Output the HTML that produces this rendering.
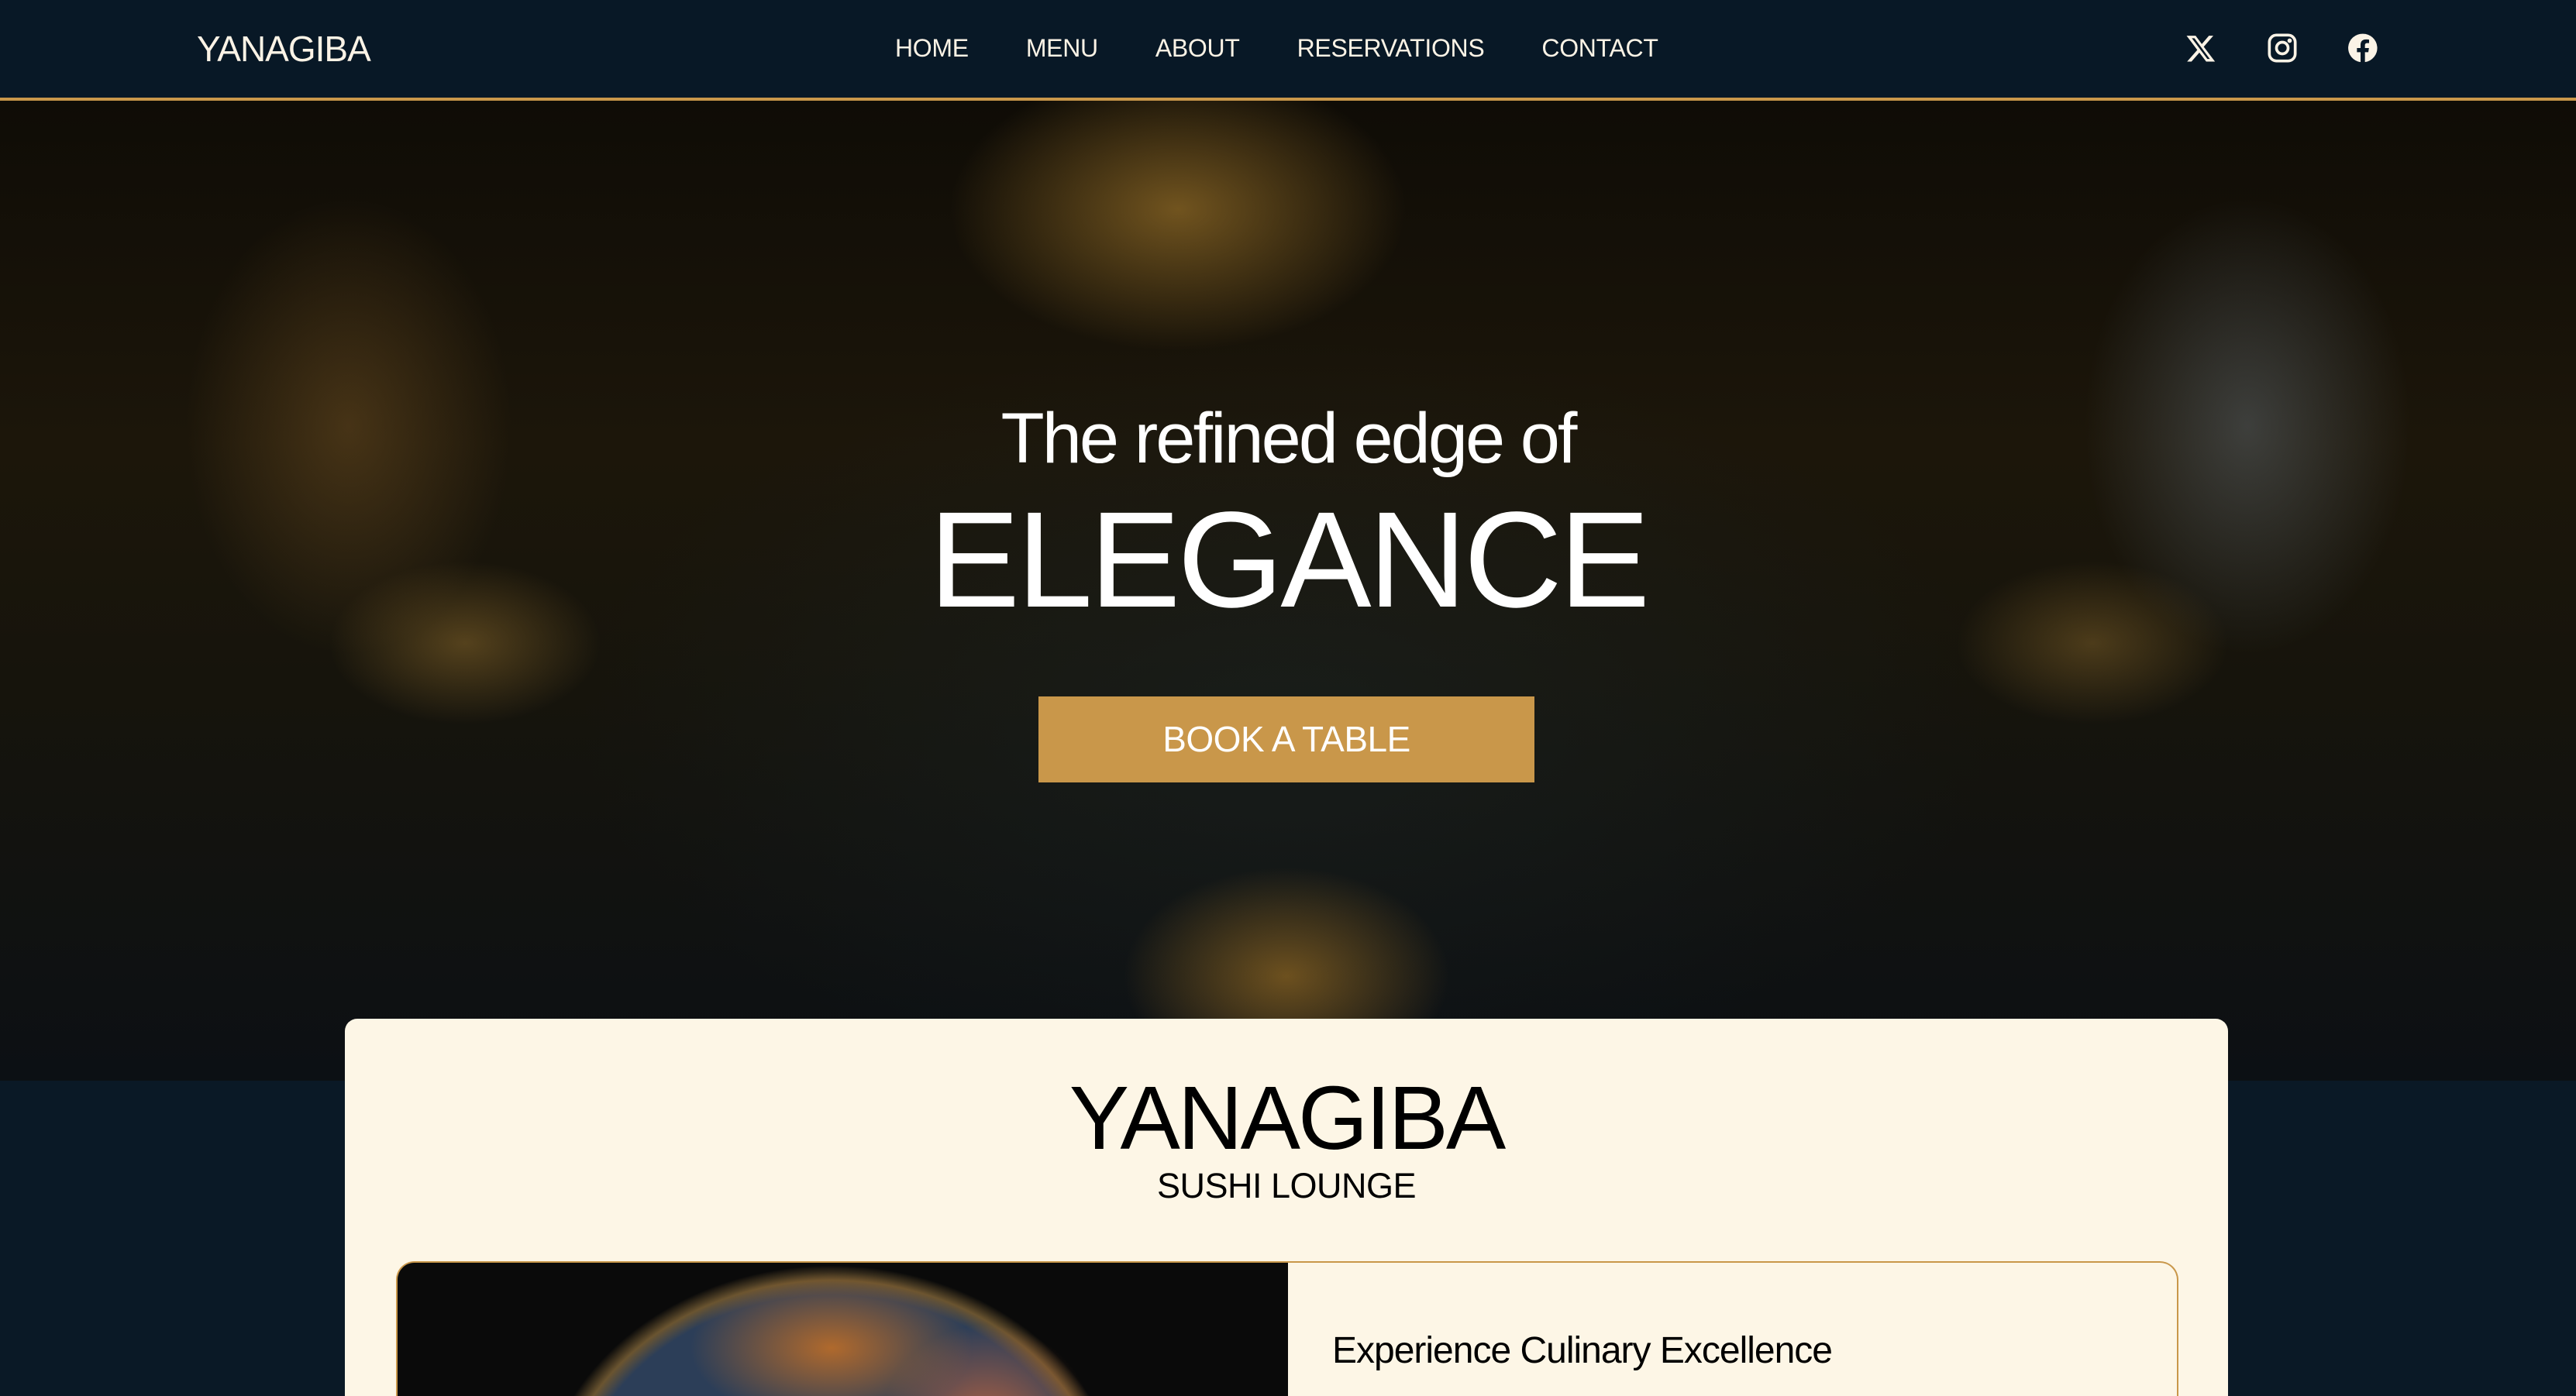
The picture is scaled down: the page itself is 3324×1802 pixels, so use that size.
<!DOCTYPE html>
<html style="width:3324px;height:1802px;overflow:hidden"><head><meta charset="utf-8"><style>
*{margin:0;padding:0;box-sizing:border-box}
body{width:3324px;height:1802px;overflow:hidden;background:#0a1926;font-family:"Liberation Sans",sans-serif;position:relative}
nav{position:absolute;left:0;top:0;width:3324px;height:130px;background:#081826;border-bottom:4px solid #c9974a;color:#fbf3e6}
.logo{position:absolute;left:254px;top:36px;font-size:46px;letter-spacing:-1px}
.links{position:absolute;left:1155px;top:44px;font-size:32px;display:flex;gap:74px;letter-spacing:-0.3px}
.ic{position:absolute;top:42px;width:40px;height:40px}
.hero{position:absolute;left:0;top:130px;width:3324px;height:1265px;overflow:hidden;
background:
radial-gradient(ellipse 420px 260px at 1520px 140px,rgba(190,140,50,.55),transparent 70%),
radial-gradient(ellipse 300px 200px at 1660px 1130px,rgba(200,140,40,.5),transparent 70%),
radial-gradient(ellipse 300px 420px at 2900px 420px,rgba(150,170,190,.28),transparent 70%),
radial-gradient(ellipse 300px 420px at 450px 420px,rgba(170,120,50,.3),transparent 70%),
radial-gradient(ellipse 250px 150px at 600px 700px,rgba(200,150,60,.35),transparent 70%),
radial-gradient(ellipse 250px 150px at 2700px 700px,rgba(200,150,60,.3),transparent 70%),
radial-gradient(ellipse 1300px 700px at 1660px 800px,rgba(30,45,50,.35),transparent 70%),
linear-gradient(180deg,#0f0c06 0%,#1c160a 35%,#16140c 60%,#0c1014 100%)}
.t1{position:absolute;left:0;width:3324px;top:514px;text-align:center;color:#fff;font-size:92px;font-weight:300;letter-spacing:-3px;line-height:1.15}
.t2{position:absolute;left:0;width:3324px;top:622px;text-align:center;color:#fff;font-size:176px;letter-spacing:-4px;line-height:1.15}
.btn{position:absolute;left:1340px;top:899px;width:640px;height:111px;background:#c9974a;color:#fff;font-size:46px;text-align:center;line-height:111px;letter-spacing:-0.5px}
.card{position:absolute;left:445px;top:1315px;width:2430px;height:487px;background:#fdf6e6;border-radius:16px 16px 0 0;overflow:hidden}
.c1{position:absolute;left:0;width:100%;top:62px;text-align:center;font-size:116px;letter-spacing:-3px;color:#000;line-height:1.15}
.c2{position:absolute;left:0;width:100%;top:190px;text-align:center;font-size:45px;color:#000;letter-spacing:-0.5px;line-height:1.15}
.box{position:absolute;left:66px;top:313px;width:2300px;height:174px;border:2px solid #c9974a;border-bottom:none;border-radius:24px 24px 0 0;overflow:hidden}
.img{position:absolute;left:0;top:0;width:1149px;height:172px;background:
radial-gradient(ellipse 260px 140px at 560px 110px,rgba(190,110,40,.9),transparent 70%),
radial-gradient(ellipse 200px 200px at 760px 220px,rgba(220,110,60,.8),transparent 70%),
radial-gradient(ellipse 560px 480px at 560px 330px,#2c3e58 60%,#6a5430 64%,#0a0a0a 68%),#050505}
.ex{position:absolute;left:1206px;top:86px;font-size:48px;color:#000;letter-spacing:-1px;line-height:1.15}
</style></head><body>
<nav>
<div class="logo">YANAGIBA</div>
<div class="links"><span>HOME</span><span>MENU</span><span>ABOUT</span><span>RESERVATIONS</span><span>CONTACT</span></div>
<svg class="ic" style="left:2820px" viewBox="0 0 24 24"><path fill="#fbf3e6" d="M18.2 2.5h3.4l-7.4 8.5 8.7 11.5h-6.8l-5.3-7-6.1 7H1.3l7.9-9L.9 2.5h7l4.8 6.4zm-1.2 18h1.9L7 4.4H5z"/></svg>
<svg class="ic" style="left:2925px" viewBox="0 0 24 24" fill="none" stroke="#fbf3e6" stroke-width="2.2"><rect x="2" y="2" width="20" height="20" rx="5.5"/><circle cx="12" cy="12" r="4.5"/><circle cx="17.7" cy="6.3" r=".6" fill="#fbf3e6"/></svg>
<svg class="ic" style="left:3029px" viewBox="0 0 24 24"><path fill="#fbf3e6" d="M12 1a11 11 0 0 0-1.8 21.9v-7.7H7.4V12h2.8V9.6c0-2.8 1.6-4.3 4.2-4.3 1.2 0 2.4.2 2.4.2v2.7h-1.4c-1.4 0-1.8.8-1.8 1.7V12h3.1l-.5 3.2h-2.6v7.7A11 11 0 0 0 12 1z"/></svg>
</nav>
<div class="hero"></div>
<div class="t1">The refined edge of</div>
<div class="t2">ELEGANCE</div>
<div class="btn">BOOK A TABLE</div>
<div class="card">
<div class="c1">YANAGIBA</div>
<div class="c2">SUSHI LOUNGE</div>
<div class="box"><div class="img"></div><div class="ex">Experience Culinary Excellence</div></div>
</div>
</body></html>
